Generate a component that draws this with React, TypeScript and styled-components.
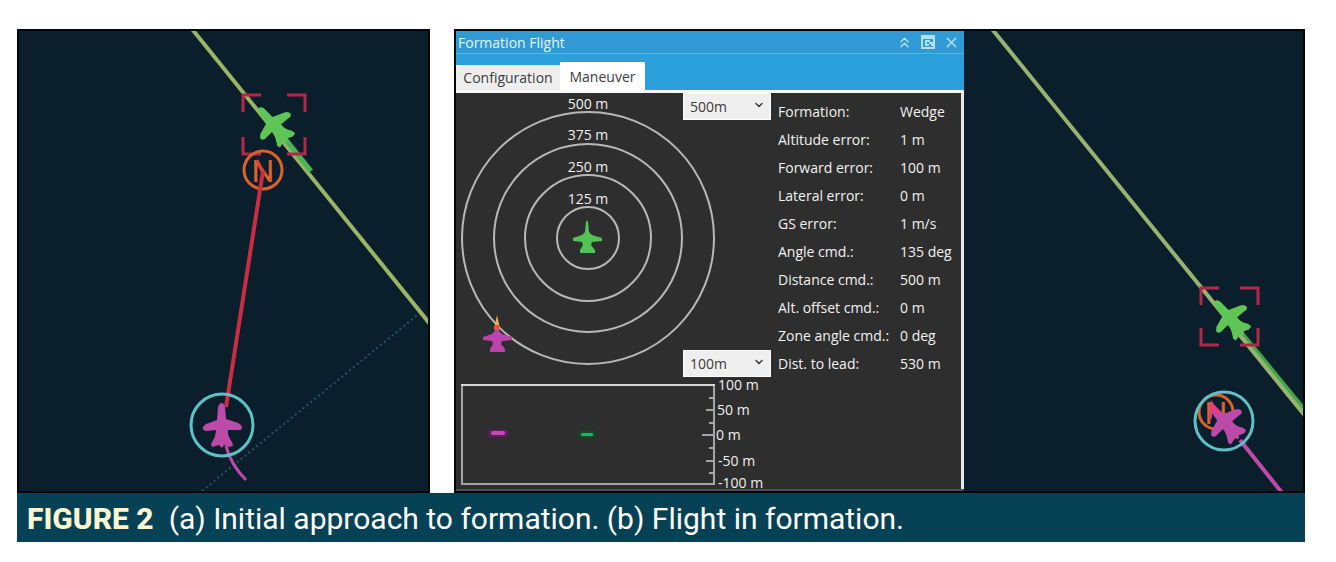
import React from "react";
import styled, { createGlobalStyle } from "styled-components";
import { ChevronDown, ChevronsUp, X } from "lucide-react";

const GlobalStyle = createGlobalStyle`
  * { box-sizing: border-box; }
  body {
    margin: 0;
    background: #ffffff;
    font-family: "Open Sans", "Noto Sans", sans-serif;
  }
`;

const Figure = styled.figure`
  margin: 29px 31px 20px 17px;
`;

const Panels = styled.div`
  display: grid;
  grid-template-columns: 413fr 851fr;
  gap: 24px;
`;

const Panel = styled.section`
  display: flex;
  min-width: 0;
  overflow: hidden;
  border: 2px solid #050708;
  background: #0a1f2b;
`;

const MapCanvas = styled.svg`
  display: block;
  flex: 1;
  min-width: 0;
  height: 0;
  min-height: 100%;
`;

const Caption = styled.figcaption`
  display: flex;
  align-items: center;
  gap: 15px;
  height: 49px;
  padding: 2px 10px 0;
  background: #064156;
  color: #ffffff;
  font-family: Roboto, sans-serif;
  font-size: 30px;
  white-space: nowrap;
`;

const FigureNumber = styled.strong`
  color: #fbf6cf;
  font-weight: 800;
`;

const Dialog = styled.div`
  display: flex;
  flex-direction: column;
  flex: none;
  width: 508px;
  background: #2e2e2e;
  border-bottom: 2px solid #4c5056;
`;

const TitleBar = styled.header`
  display: flex;
  align-items: center;
  justify-content: space-between;
  height: 23px;
  padding: 0 4px 0 2px;
  background: #2f9ad6;
  border-bottom: 1px solid #56b4e6;
  color: #e6f5fd;
`;

const Title = styled.h2`
  margin: 0;
  font-size: 14px;
  font-weight: 500;
`;

const WindowButtons = styled.div`
  display: flex;
  gap: 7px;
`;

const WindowButton = styled.button`
  display: flex;
  padding: 0;
  border: 0;
  background: none;
  color: #b5e1f8;
`;

const TabStrip = styled.div`
  display: flex;
  align-items: flex-end;
  height: 39px;
  background: #2a9fdb;
  border-bottom: 3px solid #f7f8f8;
`;

const Tab = styled.button<{ $active?: boolean }>`
  height: ${(p) => (p.$active ? 28 : 25)}px;
  width: ${(p) => (p.$active ? 85 : 104)}px;
  padding: 0;
  border: 0;
  background: ${(p) => (p.$active ? "#ffffff" : "#eeeeee")};
  color: #3c3c3c;
  font-family: inherit;
  font-size: 14px;
  font-weight: 500;
`;

const DialogBody = styled.div`
  display: grid;
  grid-template-columns: 315px 1fr;
  flex: 1;
  border-right: 3px solid #e4e6e8;
`;

const Scope = styled.div`
  position: relative;
  height: 284px;
`;

const Drawing = styled.svg`
  display: block;
  width: 100%;
  overflow: visible;
  fill: #f0f0f0;
  font-size: 14px;
  font-weight: 500;
`;

const RangePicker = styled.div<{ $end?: boolean }>`
  position: absolute;
  right: 0;
  ${(p) => (p.$end ? "bottom: 0;" : "top: 0;")}
  width: 88px;
  height: 27px;
  color: #3a3a3a;

  svg {
    position: absolute;
    top: 6px;
    right: 6px;
    pointer-events: none;
  }
`;

const RangeSelect = styled.select`
  display: block;
  width: 100%;
  height: 100%;
  padding: 0 6px;
  border: 1px solid #ffffff;
  border-radius: 0;
  background: #efefef;
  color: inherit;
  font-family: inherit;
  font-size: 14px;
  font-weight: 500;
  appearance: none;
`;

const Readings = styled.table`
  align-self: start;
  width: 100%;
  margin-top: 5px;
  border-collapse: collapse;
  color: #f2f2f2;
  font-size: 14px;
  font-weight: 500;
  line-height: 20px;
  text-align: left;
  white-space: nowrap;
`;

const Label = styled.th`
  width: 129px;
  height: 28px;
  padding: 0 0 0 7px;
  font-weight: inherit;
`;

const Value = styled.td`
  padding: 0;
`;

const readings = [
  ["Formation:", "Wedge"],
  ["Altitude error:", "1 m"],
  ["Forward error:", "100 m"],
  ["Lateral error:", "0 m"],
  ["GS error:", "1 m/s"],
  ["Angle cmd.:", "135 deg"],
  ["Distance cmd.:", "500 m"],
  ["Alt. offset cmd.:", "0 m"],
  ["Zone angle cmd.:", "0 deg"],
  ["Dist. to lead:", "530 m"],
];

const GREEN = "#5fc557";
const MAGENTA = "#bd4aa9";

function Plane({ x, y, turn = 0, color }: { x: number; y: number; turn?: number; color: string }) {
  return (
    <path
      transform={`translate(${x} ${y}) rotate(${turn})`}
      fill={color}
      d="M-1-23Q2-23 3-19L4-7L16-3Q20-1 20 2Q19 5 15 4L6 4Q5 9 10 16L11 20L7 21L2 19L0 22L-3 19L-10 21L-11 18Q-6 10-6 4L-16 5Q-20 4-19 1L-16-2L-5-6L-4-19Q-3-22-1-23Z"
    />
  );
}

function ScopePlane({ x, y, color }: { x: number; y: number; color: string }) {
  return (
    <path
      transform={`translate(${x} ${y})`}
      fill={color}
      d="M-1-17H1L2-6L5-3L15 0V3L5 4L4 7L8 12V15H-7V12L-4 7L-5 4L-14 3V0L-5-3L-2-6Z"
    />
  );
}

function Brackets({ x, y, w, h }: { x: number; y: number; w: number; h: number }) {
  return (
    <path
      fill="none"
      stroke="#b52748"
      strokeWidth="3"
      d={`M${x} ${y + 17}V${y}H${x + 18}M${x + w - 18} ${y}H${x + w}V${y + 17}M${x + w} ${y + h - 17}V${y + h}H${x + w - 18}M${x + 18} ${y + h}H${x}V${y + h - 17}`}
    />
  );
}

function NavMarker({ x, y, r }: { x: number; y: number; r: number }) {
  return (
    <g>
      <circle cx={x} cy={y} r={r} fill="none" stroke="#dc622b" strokeWidth="3" />
      <text x={x} y={y + 12} textAnchor="middle" fontFamily="Roboto, sans-serif" fontSize="32" fill="#dc622b">
        N
      </text>
    </g>
  );
}

function ApproachMap() {
  return (
    <MapCanvas viewBox="19 31 409 460" preserveAspectRatio="xMinYMin slice" role="img" aria-label="Initial approach">
      <path d="M202 491L420 313" stroke="#2b5165" strokeWidth="2" strokeDasharray="2 3" />
      <path d="M192 29L430 324" stroke="#9ab565" strokeWidth="4" />
      <path d="M286 140L311 171" stroke="#48b455" strokeWidth="5" />
      <Brackets x={243} y={95} w={62} h={59} />
      <Plane x={274} y={125} turn={-40} color={GREEN} />
      <NavMarker x={263} y={170} r={19} />
      <path d="M257 160L263 173" stroke="#d8452f" strokeWidth="3" />
      <path d="M263 171L226 407" stroke="#c92c43" strokeWidth="4" />
      <path d="M226 446Q231 465 246 480" fill="none" stroke={MAGENTA} strokeWidth="3" />
      <Plane x={222} y={426} color={MAGENTA} />
      <circle cx="222" cy="425" r="31" fill="none" stroke="#5bc2c6" strokeWidth="3" />
    </MapCanvas>
  );
}

function FormationMap() {
  return (
    <MapCanvas viewBox="964 31 339 460" preserveAspectRatio="xMinYMin slice" role="img" aria-label="Flight in formation">
      <path d="M1242 334L1306 412" stroke="#43a747" strokeWidth="5" />
      <path d="M992 29L1306 417" stroke="#98b272" strokeWidth="4" />
      <Brackets x={1201} y={288} w={57} h={57} />
      <Plane x={1230} y={318} turn={-40} color={GREEN} />
      <path d="M1240 440L1283 494" stroke={MAGENTA} strokeWidth="4" />
      <NavMarker x={1216} y={412} r={17} />
      <Plane x={1225} y={422} turn={-40} color={MAGENTA} />
      <path d="M1210 419L1212 404L1219 414" fill="none" stroke="#e83b72" strokeWidth="3" />
      <circle cx="1224" cy="421" r="29" fill="none" stroke="#5bc2c6" strokeWidth="3" />
    </MapCanvas>
  );
}

function Range({ label, options, end }: { label: string; options: string[]; end?: boolean }) {
  return (
    <RangePicker $end={end}>
      <RangeSelect aria-label={label}>
        {options.map((o) => (
          <option key={o}>{o}</option>
        ))}
      </RangeSelect>
      <ChevronDown size={12} strokeWidth={3} />
    </RangePicker>
  );
}

function FormationDialog() {
  return (
    <Dialog>
      <TitleBar>
        <Title>Formation Flight</Title>
        <WindowButtons>
          <WindowButton aria-label="Collapse"><ChevronsUp size={17} /></WindowButton>
          <WindowButton aria-label="Dock">
            <svg width="16" height="16" viewBox="0 0 16 16" fill="none" stroke="currentColor" strokeWidth="2">
              <path d="M2 2H14V14H2ZM2 4H14M10 7H6V11H9M9 9H12V12" />
            </svg>
          </WindowButton>
          <WindowButton aria-label="Close"><X size={17} /></WindowButton>
        </WindowButtons>
      </TitleBar>
      <TabStrip role="tablist">
        <Tab role="tab" aria-selected={false}>Configuration</Tab>
        <Tab role="tab" aria-selected $active>Maneuver</Tab>
      </TabStrip>
      <DialogBody>
        <div>
          <Scope>
            <Drawing viewBox="0 0 315 284" role="img" aria-label="Range rings">
              <g fill="none" stroke="#b8b8b8" strokeWidth="2">
                {[31, 63, 94, 126].map((r) => (
                  <circle key={r} cx="132" cy="145" r={r} />
                ))}
              </g>
              <g textAnchor="middle">
                <text x="132" y="16">500 m</text>
                <text x="132" y="47">375 m</text>
                <text x="132" y="79">250 m</text>
                <text x="132" y="111">125 m</text>
              </g>
              <ScopePlane x={131} y={145} color="#54c257" />
              <ScopePlane x={41} y={244} color="#bb43ae" />
              <path d="M38 236L41 222L44 236Z" fill="#e9b24c" />
              <path d="M38 237H44L43 232H39Z" fill="#e0524c" />
            </Drawing>
            <Range label="Horizontal range" options={["500m", "250m"]} />
            <Range label="Vertical range" options={["100m", "50m"]} end />
          </Scope>
          <Drawing viewBox="0 0 315 112" role="img" aria-label="Altitude profile">
            <g fill="none" stroke="#a5a5a5" strokeWidth="2">
              <path d="M258 8V107H6V8" />
              <path d="M5 8H259" stroke="#d5d5d5" />
              <path d="M253 21H258M250 33H258M253 46H258M246 58H258M253 71H258M250 84H258M253 96H258" />
            </g>
            <rect x="32" y="53" width="20" height="7" rx="3" fill="#661b68" />
            <rect x="35" y="54" width="14" height="4" rx="2" fill="#c14cb3" />
            <rect x="122" y="54" width="18" height="7" rx="3" fill="#0b4b29" />
            <rect x="125" y="56" width="12" height="3" rx="1" fill="#1fae62" />
            <text x="262" y="13">100 m</text>
            <text x="261" y="38">50 m</text>
            <text x="260" y="63">0 m</text>
            <text x="262" y="89">-50 m</text>
            <text x="262" y="111">-100 m</text>
          </Drawing>
        </div>
        <Readings>
          <tbody>
            {readings.map(([label, value]) => (
              <tr key={label}>
                <Label scope="row">{label}</Label>
                <Value>{value}</Value>
              </tr>
            ))}
          </tbody>
        </Readings>
      </DialogBody>
    </Dialog>
  );
}

export default function App() {
  return (
    <>
      <GlobalStyle />
      <Figure>
        <Panels>
          <Panel><ApproachMap /></Panel>
          <Panel>
            <FormationDialog />
            <FormationMap />
          </Panel>
        </Panels>
        <Caption>
          <FigureNumber>FIGURE 2</FigureNumber>
          <span>(a) Initial approach to formation. (b) Flight in formation.</span>
        </Caption>
      </Figure>
    </>
  );
}
